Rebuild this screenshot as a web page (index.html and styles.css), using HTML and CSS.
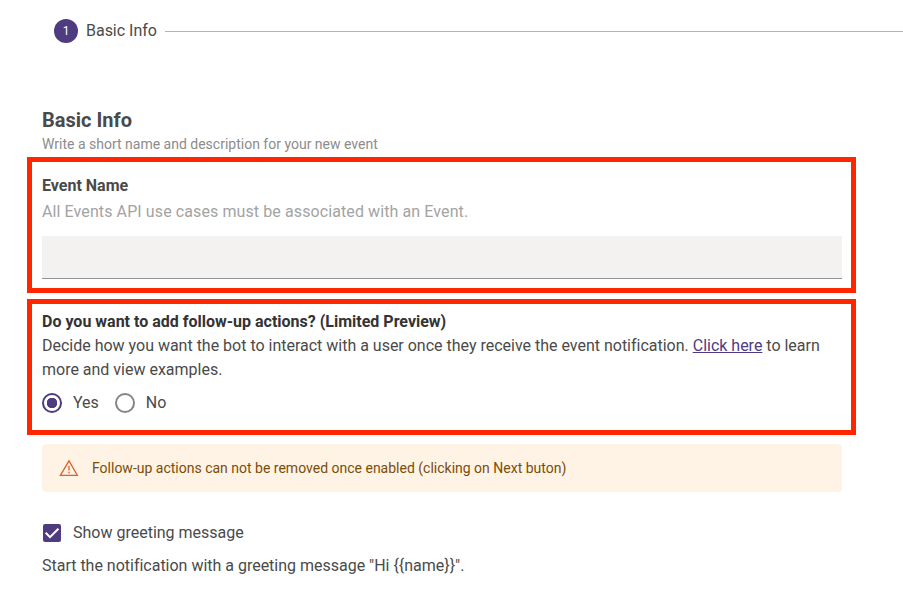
FILE: index.html
```html
<!DOCTYPE html>
<html lang="en">
<head>
<meta charset="utf-8">
<title>Basic Info</title>
<link rel="stylesheet" href="styles.css">
</head>
<body>
<header class="stepper"><span class="step-number">1</span><span class="step-label">Basic Info</span><span class="step-line"></span></header>
<main>
<h1>Basic Info</h1>
<p class="subtitle">Write a short name and description for your new event</p>
<section class="panel name-panel">
<label class="title" for="event">Event Name</label>
<p class="hint">All Events API use cases must be associated with an Event.</p>
<input class="field" id="event" type="text">
</section>
<section class="panel actions-panel">
<h2 class="title question">Do you want to add follow-up actions? (Limited Preview)</h2>
<p class="description"><span class="line first-line">Decide how you want the bot to interact with a user once they receive the event notification. <a href="#">Click here</a> to learn</span><br><span class="line second-line">more and view examples.</span></p>
<div class="options"><span class="radio selected"></span><span class="yes">Yes</span><span class="radio"></span><span>No</span></div>
</section>
<div class="warning">
<svg width="20" height="18" viewBox="0 0 20 18" fill="none" stroke="#d9622b" stroke-width="1.3"><path d="M10 1.9 18.3 16.3H1.4Z"/><path d="M10 6.8v4.6M10 12.8v1.6"/></svg>
<span class="warning-text">Follow-up actions can not be removed once enabled (clicking on Next buton)</span>
</div>
<div class="greeting"><span class="checkbox"><svg width="18" height="18" viewBox="0 0 18 18" fill="none" stroke="#fff" stroke-width="2"><path d="m2.7 8.8 4.3 4.3 8.4-8.4"/></svg></span><span>Show greeting message</span></div>
<p class="greeting-note">Start the notification with a greeting message "Hi {{name}}".</p>
</main>
</body>
</html>
```
FILE: styles.css
```css
* { box-sizing: border-box; }
body { margin: 0; background: #fff; color: #4a4a4a; font: 16px/24px Roboto, sans-serif; overflow: hidden; }
h1, h2, p { margin: 0; }
.stepper { display: flex; align-items: center; height: 62px; padding-left: 54px; }
.step-number { width: 24px; height: 24px; border-radius: 50%; background: #4f3b80; color: #fff; font-size: 12px; text-align: center; }
.step-label { margin: 0 8px; white-space: nowrap; letter-spacing: -0.02px; }
.step-line { flex: 1; height: 1px; background: #b5b5b5; }
main { padding: 46px 0 0 27px; width: 856px; }
h1 { margin-left: 15px; font-size: 20px; line-height: 24px; font-weight: 700; }
.subtitle { margin-left: 15px; font-size: 14px; line-height: 24px; color: #8c8c8c; }
.panel { border: 5px solid #ff2600; padding-left: 10px; width: 829px; }
.name-panel { height: 136px; margin-top: 1px; padding-top: 12px; }
.title { display: block; font-size: 16px; font-weight: 700; line-height: 24px; }
.hint { color: #a3a3a3; margin-top: 2px; letter-spacing: 0.1px; }
.field { display: block; width: 800px; height: 43px; margin-top: 12px; border: 0; border-bottom: 1px solid #949494; background: #f3f2f1; }
.actions-panel { height: 136px; margin-top: 6px; padding-top: 6px; }
.question { color: #333; }
.line { white-space: nowrap; letter-spacing: -0.008px; }
a { color: #4f3b80; }
.options { display: flex; align-items: center; height: 24px; margin-top: 9px; }
.radio { width: 20px; height: 20px; border: 2px solid #858585; border-radius: 50%; margin-right: 11px; }
.selected { border-color: #4f3b80; background: radial-gradient(circle, #4f3b80 0 5px, transparent 5.5px); }
.yes { margin-right: 16px; }
.warning { display: flex; align-items: center; width: 800px; height: 48px; margin: 9px 0 0 15px; padding-left: 17px; background: #fff3e5; border-radius: 4px; color: #7a4d08; font-size: 14px; }
.warning-text { margin-left: 13px; }
.greeting { display: flex; align-items: center; margin: 29px 0 0 15px; }
.checkbox { display: flex; width: 18px; height: 18px; border-radius: 2px; margin: 0 12px 0 1px; background: #4f3b80; }
.greeting-note { margin: 9px 0 0 15px; letter-spacing: -0.01px; }
```
